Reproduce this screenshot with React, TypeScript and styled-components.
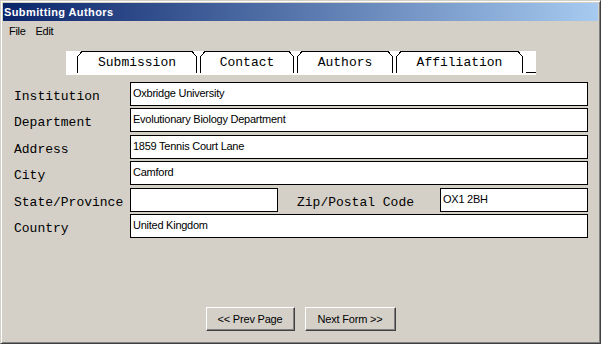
import React, {FC} from 'react';
import styled, {createGlobalStyle} from 'styled-components';

const GlobalStyle = createGlobalStyle`
    html, body {
        margin: 0;
        padding: 0;
        background: #d4d0c8;
    }
    * {
        box-sizing: border-box;
    }
`;

const Window = styled.div`
    width: 601px;
    height: 344px;
    display: flex;
    flex-direction: column;
    padding: 2px;
    background: #d4d0c8;
    border: 1px solid;
    border-color: #d4d0c8 #404040 #404040 #d4d0c8;
    box-shadow: inset 1px 1px #ffffff, inset -1px -1px #808080;
    font-family: 'Liberation Sans', Arial, sans-serif;
    font-size: 11px;
    color: #000;
`;

const TitleBar = styled.div`
    height: 18px;
    line-height: 18px;
    padding-left: 1px;
    background: linear-gradient(to right, #0a246a, #a6caf0);
    color: #ffffff;
    font-weight: bold;
    letter-spacing: 0.4px;
`;

const MenuBar = styled.div`
    height: 20px;
    line-height: 20px;
    display: flex;
    gap: 10px;
    padding-left: 6px;
`;

const MenuItem = styled.span`
    letter-spacing: -0.3px;
`;

// white strip that holds the tab heads
const TabStrip = styled.div`
    margin: 10px 0 0 63px;
    width: 470px;
    height: 24px;
    padding-left: 11px;
    display: flex;
    align-items: flex-start;
    gap: 3px;
    background: #ffffff;
`;

const TabHead = styled.div<{$width: number}>`
    position: relative;
    width: ${props => props.$width}px;
    height: 22px;
    padding-top: 1px;
    line-height: 22px;
    text-align: center;
    font-family: 'Liberation Mono', 'Courier New', monospace;
    font-size: 13px;

    svg {
        position: absolute;
        top: 0;
        left: 0;
    }

    span {
        position: relative;
    }
`;

// bottom line carrying on from the open tab
const TabFiller = styled.div`
    flex: 1;
    height: 22px;
    border-bottom: 1px solid #000;
`;

const Form = styled.div`
    margin-top: 7px;
    padding: 0 10px 0 11px;
    display: flex;
    flex-direction: column;
    gap: 2.4px;
`;

const Row = styled.div`
    display: flex;
    align-items: flex-start;
`;

const Label = styled.div<{$width?: number; $gap?: number}>`
    width: ${props => props.$width || 116}px;
    margin-left: ${props => props.$gap || 0}px;
    height: 24px;
    padding-top: 5px;
    line-height: 19px;
    font-family: 'Liberation Mono', 'Courier New', monospace;
    font-size: 13px;
    white-space: nowrap;
`;

const Field = styled.div<{$width?: number}>`
    ${props => (props.$width ? `width: ${props.$width}px;` : 'flex: 1;')}
    height: 24px;
    padding: 4px 2px 0 2px;
    line-height: 13px;
    background: #ffffff;
    border: 1px solid #000;
    letter-spacing: -0.25px;
    white-space: nowrap;
    overflow: hidden;
`;

const ButtonBar = styled.div`
    margin: auto 0 10px 0;
    display: flex;
    justify-content: center;
    gap: 10px;
`;

const Button = styled.button<{$width: number}>`
    width: ${props => props.$width}px;
    height: 24px;
    padding: 0;
    background: #d4d0c8;
    border: 1px solid;
    border-color: #ffffff #404040 #404040 #ffffff;
    box-shadow: inset -1px -1px #808080, inset 1px 1px #d4d0c8;
    font-family: 'Liberation Sans', Arial, sans-serif;
    font-size: 11px;
    letter-spacing: -0.2px;
    color: #000;
`;

type TabProps = {
    label: string;
    width: number;
};

const Tab: FC<TabProps> = ({label, width}) => (
    <TabHead $width={width}>
        <svg width={width} height={22} shapeRendering="crispEdges">
            <path
                d={`M0.5 22 V5.5 L5 0.5 H${width - 5} L${width - 0.5} 5.5 V22`}
                fill="#ffffff"
                stroke="#000000"
                strokeWidth={1}
            />
        </svg>
        <span>{label}</span>
    </TabHead>
);

const tabs: TabProps[] = [
    {label: 'Submission', width: 120},
    {label: 'Contact', width: 94},
    {label: 'Authors', width: 96},
    {label: 'Affiliation', width: 127},
];

const App: FC = () => (
    <>
        <GlobalStyle />
        <Window>
            <TitleBar>Submitting Authors</TitleBar>
            <MenuBar>
                <MenuItem>File</MenuItem>
                <MenuItem>Edit</MenuItem>
            </MenuBar>
            <TabStrip>
                {tabs.map(tab => (
                    <Tab key={tab.label} {...tab} />
                ))}
                <TabFiller />
            </TabStrip>
            <Form>
                <Row>
                    <Label>Institution</Label>
                    <Field>Oxbridge University</Field>
                </Row>
                <Row>
                    <Label>Department</Label>
                    <Field>Evolutionary Biology Department</Field>
                </Row>
                <Row>
                    <Label>Address</Label>
                    <Field>1859 Tennis Court Lane</Field>
                </Row>
                <Row>
                    <Label>City</Label>
                    <Field>Camford</Field>
                </Row>
                <Row>
                    <Label>State/Province</Label>
                    <Field $width={148} />
                    <Label $width={143} $gap={19}>
                        Zip/Postal Code
                    </Label>
                    <Field>OX1 2BH</Field>
                </Row>
                <Row>
                    <Label>Country</Label>
                    <Field>United Kingdom</Field>
                </Row>
            </Form>
            <ButtonBar>
                <Button $width={89}>&lt;&lt; Prev Page</Button>
                <Button $width={91}>Next Form &gt;&gt;</Button>
            </ButtonBar>
        </Window>
    </>
);

export default App;
